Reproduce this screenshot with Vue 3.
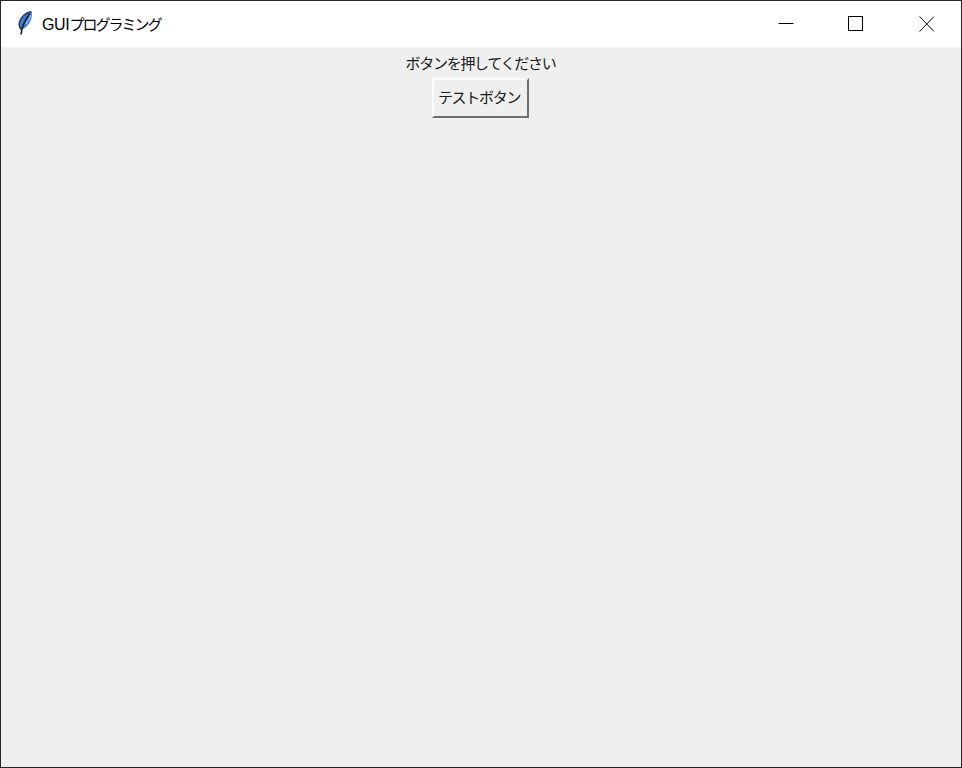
<script setup>
const titleLatin = 'GUI';
const titleKana = 'プログラミング';
const message = 'ボタンを押してください';
const buttonLabel = 'テストボタン';
</script>

<template>
  <div class="window">
    <header class="titlebar">
      <svg class="feather" width="17" height="26" viewBox="0 0 17 26">
        <path d="M15.500 1C10.500 1.500 4.500 6 3 12C2.500 15 3 17.500 5 19.500C10 18.500 14 13.500 15.500 8C16 5 16 3 15.500 1z" fill="#3f78cc" />
        <path d="M15 2C9.500 3 4.500 7 3.300 12.500C2.800 15 3.300 17.500 5 19.500" fill="none" stroke="#26395e" stroke-width="1.300" />
        <path d="M14 4C10.500 8 7.500 13 6 19L5 24.500" fill="none" stroke="#16202f" stroke-width="1.600" />
        <path d="M14.500 5c-.5 3-2.500 6.500-5 9.500" fill="none" stroke="#9cc0ee" stroke-width="1.400" />
      </svg>
      <span class="titlebar__text">{{ titleLatin }}<span class="titlebar__kana">{{ titleKana }}</span></span>
      <div class="controls">
        <div class="control">
          <svg width="16" height="16" viewBox="0 0 16 16"><path d="M0.500 7.500h15" stroke="#000" fill="none" /></svg>
        </div>
        <div class="control">
          <svg width="16" height="16" viewBox="0 0 16 16"><rect x="0.500" y="0.500" width="14" height="14" stroke="#000" fill="none" /></svg>
        </div>
        <div class="control">
          <svg width="16" height="16" viewBox="0 0 16 16"><path d="M1.500 0.500l14.500 15M16 0.500l-14.500 15" stroke="#000" fill="none" /></svg>
        </div>
      </div>
    </header>
    <main class="content">
      <div class="label">{{ message }}</div>
      <button class="button" type="button">{{ buttonLabel }}</button>
    </main>
  </div>
</template>

<style>
html,
body {
  margin: 0;
  padding: 0;
  overflow: hidden;
}
</style>

<style scoped>
.window {
  box-sizing: border-box;
  display: flex;
  flex-direction: column;
  width: 962px;
  height: 768px;
  border: 1px solid #262626;
  background: #f0f0f0;
  font-family: "Noto Sans CJK JP", "Liberation Sans", sans-serif;
  color: #000;
}

.titlebar {
  display: flex;
  align-items: center;
  flex: none;
  height: 46px;
  padding-left: 15px;
  background: #fff;
}

.feather {
  flex: none;
  margin-top: -2px;
  filter: blur(0.4px);
}

.titlebar__text {
  margin-left: 9px;
  padding-bottom: 2px;
  font-family: "Liberation Sans", "Noto Sans CJK JP", sans-serif;
  font-size: 16px;
  letter-spacing: -0.35px;
  white-space: nowrap;
}

.titlebar__kana {
  font-size: 15px;
  letter-spacing: -2px;
}

.controls {
  display: flex;
  align-items: center;
  margin-left: auto;
}

.control {
  display: flex;
  align-items: center;
  justify-content: center;
  width: 70px;
  height: 46px;
}

.content {
  display: flex;
  flex-direction: column;
  align-items: center;
  flex: 1;
  background: #efefef;
}

.label {
  height: 31px;
  padding-right: 1px;
  font-size: 15px;
  line-height: 31px;
  letter-spacing: -1.300px;
  color: #1a1a1a;
  white-space: nowrap;
}

.button {
  box-sizing: border-box;
  width: 97px;
  height: 40px;
  margin: 0 2px 0 0;
  padding: 0 2px 4px 0;
  border: 2px solid;
  border-color: #fcfcfc #6e6e6e #6e6e6e #fcfcfc;
  background: #efefef;
  font-family: inherit;
  font-size: 15px;
  letter-spacing: -1.300px;
  color: #1a1a1a;
}
</style>
